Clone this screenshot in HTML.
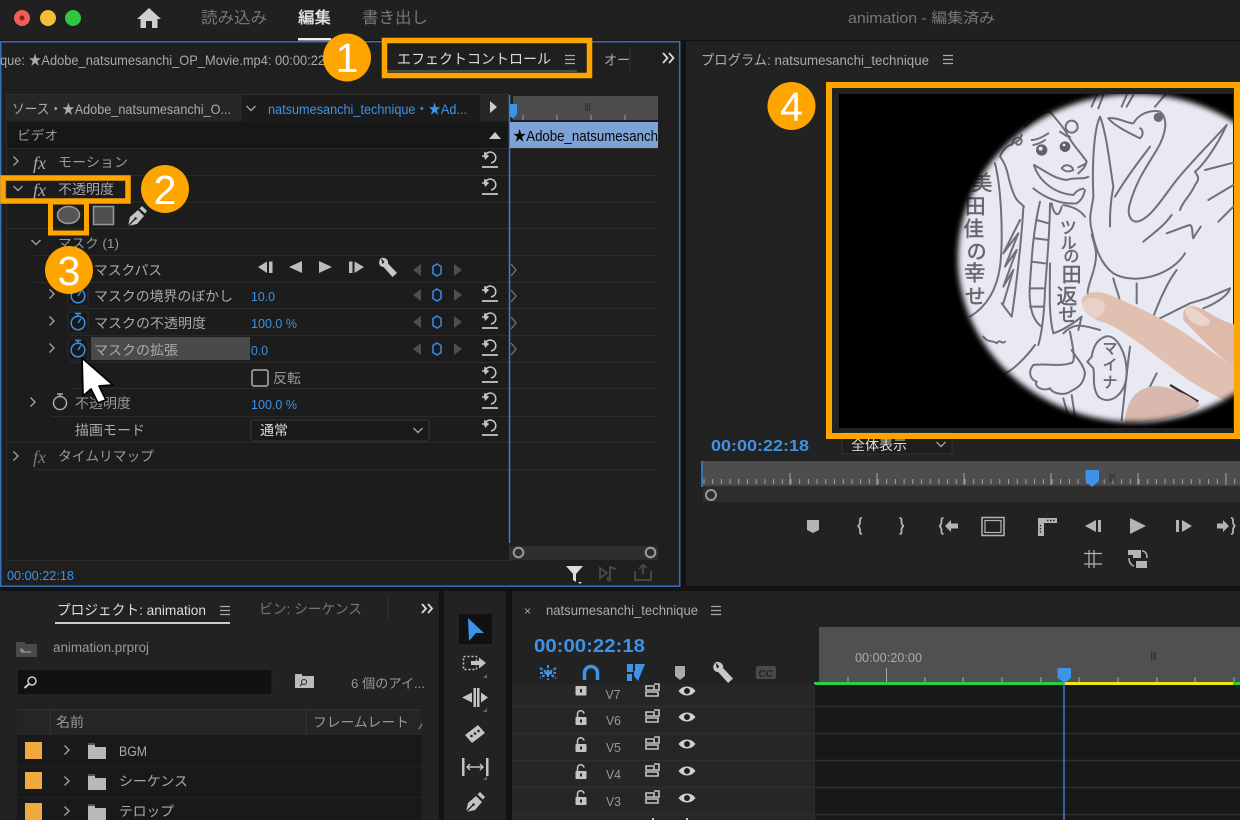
<!DOCTYPE html>
<html lang="ja"><head><meta charset="utf-8"><title>animation</title>
<style>
html,body{margin:0;padding:0;background:#111;width:1240px;height:820px;overflow:hidden}
svg{display:block}
text{font-family:"Liberation Sans","Noto Sans CJK JP",sans-serif;fill:#999;font-size:13px}
.b{fill:#3d93e6}.w{fill:#ddd}.l{fill:#aaa}.d{fill:#777}
.h{fill:#66666e;font-weight:400;stroke:#66666e;stroke-width:1.5px}
</style></head><body>
<svg width="1240" height="820" viewBox="0 0 1240 820" xmlns="http://www.w3.org/2000/svg">
<defs>
<g id="reset" fill="none" stroke="#c4c4c4" stroke-width="1.6"><path d="M-8 8H8" stroke-width="1.8"/><path d="M-5 -3A5.500 5.500 0 1 1 1 4"/><path d="M-8 -3H-1.500M-5 -7V-1" stroke-width="1.500"/><path d="M-1 -3L-5 1L-6 -6Z" fill="#c4c4c4" stroke="none"/></g>
<g id="kf"><path d="M-16 -6V6L-24 0Z" fill="#4e4e4e"/><path d="M0 -6L4 -3.500V3.500L0 6L-4 3.500V-3.500Z" fill="none" stroke="#3a86dc" stroke-width="1.600"/><path d="M17 -6L25 0L17 6Z" fill="#4e4e4e"/></g>
<g id="sw" fill="none" stroke="#3d8fe6" stroke-width="1.500"><circle cy="1" r="6.800"/><path d="M-3 -8.500H3M0 -8.500V-5.500M0 1L3 -3.500"/></g>
<g id="swb"><rect x="-10" y="-10" width="20" height="21" rx="2" fill="#181818" stroke="#2c2c2c"/><use href="#sw"/></g>
<path id="chr" d="M-2.500 -4.500L2 0L-2.500 4.500" fill="none" stroke="#a0a0a0" stroke-width="1.400"/>
<path id="chd" d="M-4.500 -2L0 2.500L4.500 -2" fill="none" stroke="#a0a0a0" stroke-width="1.400"/>
<g id="hb" stroke="#aaa" stroke-width="1.200"><path d="M0 .5H10M0 4.500H10M0 8.500H10"/></g>
<g id="fold"><path d="M0 2H7V4H18V16H0Z" fill="#b8b8b8"/><path d="M0 1H7" stroke="#888"/></g>
<g id="lock" fill="#c4c4c4"><rect x="-5.500" y="-1" width="11" height="8" rx="1"/><path d="M-3.500 -1V-3.500A3 3 0 0 1 3 -4.500" fill="none" stroke="#c4c4c4" stroke-width="1.500"/><rect x="-1" y="1.500" width="2" height="3" fill="#222"/></g>
<g id="tg" fill="none" stroke="#c4c4c4" stroke-width="1.600"><path d="M-7 -4H1V0H-7ZM-7 2H5V6H-7ZM1 -6H6V0H1"/></g>
<g id="eye"><path d="M-8.500 0C-4 -6 4 -6 8.500 0C4 6 -4 6 -8.500 0Z" fill="#d0d0d0"/><circle r="3" fill="#222"/></g>
<g id="wr"><path d="M-6 -9C-10 -4 -7 0 -3.500 0L5.500 10L10 6L1 -3.500C2 -7 -2 -10 -6 -9L-2.500 -5L-4.500 -3Z" fill="#c8c8c8"/></g>
<g id="pen"><path d="M-9 10L-7 1L1 -6L7 0L0 8Z" fill="#c4c4c4"/><path d="M2.500 -7.500L5 -10L10 -5L8 -2.500Z" fill="#c4c4c4"/><path d="M-9 10L-2 3" stroke="#222" stroke-width="1.300"/><circle cx="-1.500" cy="2.500" r="1.300" fill="#222"/></g>
<mask id="pm"><rect x="839" y="94" width="394" height="334" fill="#000"/><ellipse cx="1135" cy="258" rx="177" ry="164" fill="#fff" style="filter:blur(3px)"/></mask>
<clipPath id="hc"><rect x="842" y="439" width="110" height="16"/></clipPath>
</defs>

<rect width="1240" height="820" fill="#121212"/>
<!-- top bar -->
<rect width="1240" height="40" fill="#202020"/>
<circle cx="22" cy="18" r="8" fill="#ee5f58"/><circle cx="22" cy="18" r="2.500" fill="#8f1f1a"/>
<circle cx="48" cy="18" r="8" fill="#f6bd3b"/><circle cx="73" cy="18" r="8" fill="#2ec840"/>
<path d="M149 8L161 19H157.500V28H152V21H146V28H140.500V19H137Z" fill="#cfcfcf"/>
<text x="201" y="23" style="font-size:16px" textLength="66" lengthAdjust="spacingAndGlyphs" class="d">読み込み</text>
<text x="298" y="23" style="font-size:16px;font-weight:700" textLength="33" lengthAdjust="spacingAndGlyphs" class="w">編集</text>
<text x="362" y="23" style="font-size:16px" textLength="66" lengthAdjust="spacingAndGlyphs" class="d">書き出し</text>
<rect x="298" y="38" width="33" height="2.500" fill="#eee"/>
<text x="848" y="23" style="font-size:14.500px" textLength="147" lengthAdjust="spacingAndGlyphs" class="d">animation - 編集済み</text>

<!-- effect controls -->
<rect x="0" y="41" width="680" height="545" fill="#1f1f1f"/>
<rect x=".7" y="41.700" width="679" height="544.500" fill="none" stroke="#3670b8" stroke-width="1.500"/>
<text x="0" y="65" style="font-size:14px" textLength="325" lengthAdjust="spacingAndGlyphs" class="l">que: ★Adobe_natsumesanchi_OP_Movie.mp4: 00:00:22</text>
<text x="397" y="64" style="font-size:14px" textLength="154" lengthAdjust="spacingAndGlyphs" class="w">エフェクトコントロール</text>
<use href="#hb" x="565" y="55"/>
<path d="M387 71H577" stroke="#777"/>
<text x="604" y="65" style="font-size:14px" textLength="26" lengthAdjust="spacingAndGlyphs" class="l">オー</text><path d="M630 47V71" stroke="#333"/>
<path d="M663 53L667.500 58L663 63M669 53L673.500 58L669 63" fill="none" stroke="#d8d8d8" stroke-width="1.800"/>

<!-- inner -->
<rect x="6.500" y="94.500" width="503" height="466" fill="#1c1c1c" stroke="#2e2e2e"/>
<rect x="7" y="95" width="235" height="26" fill="#262626"/>
<rect x="242" y="95" width="238" height="26" fill="#1b1b1b"/>
<rect x="480" y="95" width="29" height="26" fill="#262626"/>
<text x="12" y="114" style="font-size:14px" textLength="219" lengthAdjust="spacingAndGlyphs" class="l">ソース・★Adobe_natsumesanchi_O...</text>
<use href="#chd" x="251" y="108"/>
<text x="268" y="114" style="font-size:14px" textLength="199" lengthAdjust="spacingAndGlyphs" class="b">natsumesanchi_technique・★Ad...</text>
<path d="M490 101L497 107L490 113Z" fill="#ccc"/>
<rect x="7" y="122" width="502" height="26" fill="#171717"/>
<text x="17" y="140" style="font-size:13px" textLength="41" lengthAdjust="spacingAndGlyphs">ビデオ</text>
<path d="M489 139L495 132L501 139Z" fill="#ccc"/>
<g stroke="#2a2a2a"><path d="M7 148.500H658M7 175.500H658M7 202.500H658M7 228.500H658M33 255.500H658M33 282.500H658M70 308.500H658M70 335.500H658M70 362.500H658M70 388.500H658M51 416.500H658M7 442.500H658M33 469.500H658"/></g>
<!-- rows -->
<use href="#chr" x="16" y="161"/>
<text x="33" y="169" style="font-size:18px;font-family:'Liberation Serif',serif;font-style:italic" class="l">fx</text>
<text x="58" y="167" style="font-size:13.500px" textLength="70" lengthAdjust="spacingAndGlyphs">モーション</text>
<use href="#reset" x="490" y="159"/>
<use href="#chd" x="18" y="188"/>
<text x="33" y="196" style="font-size:18px;font-family:'Liberation Serif',serif;font-style:italic" class="l">fx</text>
<text x="58" y="194" style="font-size:13.500px" textLength="56" lengthAdjust="spacingAndGlyphs" class="l">不透明度</text>
<use href="#reset" x="490" y="186"/>
<ellipse cx="68.500" cy="215" rx="11" ry="8.500" fill="#555" stroke="#9a9a9a" stroke-width="1.500"/>
<rect x="93.500" y="206.500" width="20" height="18" fill="#4e4e4e" stroke="#999" stroke-width="1.500"/>
<use href="#pen" transform="translate(137,216)"/>
<use href="#chd" x="36" y="242"/>
<text x="58" y="248" style="font-size:13px" textLength="61" lengthAdjust="spacingAndGlyphs">マスク (1)</text>
<text x="94" y="275" style="font-size:13.500px" textLength="68" lengthAdjust="spacingAndGlyphs" class="l">マスクパス</text>
<!-- transport -->
<g fill="#bcbcbc"><path d="M258 267L267 261.500V273ZM269 261.500H272.500V273H269Z"/><path d="M289 267L302 261V273Z"/><path d="M319 261L332 267L319 273Z"/><path d="M349 261.500H352.500V273H349ZM354.500 261.500L364 267L354.500 273Z"/></g>
<use href="#wr" x="387" y="267"/>
<use href="#kf" x="437" y="270"/>
<text x="94" y="301" style="font-size:13.500px" textLength="139" lengthAdjust="spacingAndGlyphs" class="l">マスクの境界のぼかし</text>
<text x="251" y="301" style="font-size:13px" textLength="24" lengthAdjust="spacingAndGlyphs" class="b">10.0</text>
<use href="#kf" x="437" y="295"/><use href="#reset" x="490" y="293"/>
<use href="#chr" x="52" y="294"/><use href="#swb" x="78" y="295"/>
<text x="94" y="328" style="font-size:13.500px" textLength="112" lengthAdjust="spacingAndGlyphs" class="l">マスクの不透明度</text>
<text x="251" y="328" style="font-size:13px" textLength="46" lengthAdjust="spacingAndGlyphs" class="b">100.0 %</text>
<use href="#kf" x="437" y="322"/><use href="#reset" x="490" y="320"/>
<use href="#chr" x="52" y="321"/><use href="#swb" x="78" y="322"/>
<rect x="91" y="337" width="159" height="23" fill="#4a4a4a"/>
<text x="94" y="355" style="font-size:13.500px" textLength="84" lengthAdjust="spacingAndGlyphs" class="l">マスクの拡張</text>
<text x="251" y="355" style="font-size:13px" textLength="17" lengthAdjust="spacingAndGlyphs" class="b">0.0</text>
<use href="#kf" x="437" y="349"/><use href="#reset" x="490" y="347"/>
<use href="#chr" x="52" y="348"/><use href="#swb" x="78" y="349"/>
<rect x="252" y="370" width="16" height="16" rx="2" fill="none" stroke="#999" stroke-width="1.800"/>
<text x="273" y="383" style="font-size:13.500px" textLength="28" lengthAdjust="spacingAndGlyphs">反転</text>
<use href="#reset" x="490" y="374"/>
<use href="#chr" x="33" y="402"/>
<g fill="none" stroke="#aaa" stroke-width="1.500"><circle cx="60" cy="403" r="6.500"/><path d="M57 394H63M60 394V396.500"/></g>
<text x="75" y="408" style="font-size:13.500px" textLength="56" lengthAdjust="spacingAndGlyphs">不透明度</text>
<text x="251" y="409" style="font-size:13px" textLength="46" lengthAdjust="spacingAndGlyphs" class="b">100.0 %</text>
<use href="#reset" x="490" y="400"/>
<text x="75" y="435" style="font-size:13.500px" textLength="70" lengthAdjust="spacingAndGlyphs" class="l">描画モード</text>
<rect x="251" y="420" width="178" height="21" rx="2" fill="#1a1a1a" stroke="#383838"/>
<text x="260" y="435" style="font-size:13.500px" textLength="28" lengthAdjust="spacingAndGlyphs" class="w">通常</text>
<use href="#chd" x="418" y="430"/>
<use href="#reset" x="490" y="427"/>
<use href="#chr" x="16" y="456"/>
<text x="33" y="463" style="font-size:18px;font-family:'Liberation Serif',serif;font-style:italic" class="d">fx</text>
<text x="58" y="461" style="font-size:13.500px" textLength="96" lengthAdjust="spacingAndGlyphs">タイムリマップ</text>
<!-- ECP right -->
<rect x="513" y="96" width="145" height="24" fill="#4c4c4c"/>
<path d="M523 115V120M557 115V120M591 115V120M625 115V120" stroke="#999"/>
<path d="M585.500 103V111M587.500 103V111M589.500 103V111" stroke="#2a2a2a" stroke-width=".8"/>
<path d="M509.500 95V543" stroke="#3a7fd0" stroke-width="1.500"/>
<path d="M510 104H517V114L513 119L510 116Z" fill="#3d93e6"/>
<rect x="510" y="122" width="148" height="26" fill="#7da3d6"/>
<text x="513" y="141" style="font-size:14.500px;fill:#050505" textLength="145" lengthAdjust="spacingAndGlyphs">★Adobe_natsumesanch</text>
<g fill="none" stroke="#777" stroke-width="1.200"><path d="M511 264L516 270L511 276M511 290L516 296L511 302M511 317L516 323L511 329M511 343L516 349L511 355"/></g>
<rect x="510" y="546" width="148" height="14" fill="#2e2e2e"/>
<circle cx="518.500" cy="552.500" r="4.800" fill="#2e2e2e" stroke="#999" stroke-width="2"/>
<circle cx="650.500" cy="552.500" r="4.800" fill="#2e2e2e" stroke="#999" stroke-width="2"/>
<text x="7" y="580" style="font-size:13px" textLength="67" lengthAdjust="spacingAndGlyphs" class="b">00:00:22:18</text>
<path d="M566 566H583L576 574V582L573 580V574Z" fill="#ddd"/><path d="M578 582H582L580 584Z" fill="#ddd"/>
<g fill="none" stroke="#4a4a4a" stroke-width="1.800"><path d="M600 568L607 573L600 578ZM610 578V567L616 569"/><circle cx="609" cy="579" r="1.500"/><path d="M635 571V580H651V571M643 574V566M639 569L643 565L647 568"/></g>

<!-- program -->
<rect x="686" y="41" width="554" height="545" fill="#222"/>
<text x="701" y="65" style="font-size:14px" textLength="228" lengthAdjust="spacingAndGlyphs" class="l">プログラム: natsumesanchi_technique</text>
<use href="#hb" x="943" y="55"/>
<rect x="839" y="94" width="394" height="334" fill="#000"/>
<g mask="url(#pm)">
<rect x="839" y="94" width="394" height="334" fill="#e9e9f3"/>
<g transform="translate(950,90) scale(.33333)">
<g fill="none" stroke="#707078" stroke-width="6" stroke-linecap="round" stroke-linejoin="round">
<path d="M430 320C425 200 435 110 450 80C470 130 480 230 490 290C480 340 480 380 480 410"/>
<path d="M430 320C425 360 415 380 425 420C435 470 450 520 490 550C560 590 670 550 705 490"/>
<path d="M475 85C500 80 530 100 550 100C570 65 610 60 630 65C655 85 650 130 620 180C590 230 560 270 540 340C530 370 540 395 560 395C600 390 640 320 680 270C720 220 790 150 830 105"/>
<path d="M475 85C490 105 530 125 570 145C585 130 575 115 570 115"/>
<path d="M495 320C530 260 570 210 600 170"/>
<path d="M665 375C640 410 610 430 580 455M650 430C680 420 700 410 720 405C730 410 725 430 730 445C740 425 750 415 752 410"/>
<path d="M765 240L850 218M775 330L850 285M805 395L850 350"/>
<path d="M830 105C800 170 760 225 735 245C745 260 750 265 735 285C720 320 700 330 690 360"/>
<path d="M425 50L440 15M445 55L460 15M515 50L530 15M530 50L550 15M615 50L645 15"/>
<path d="M490 565C495 590 510 620 510 640M560 580V640M680 540C650 580 625 640 610 680"/>
<path d="M620 690L720 640L770 625L840 595C835 615 800 640 760 655"/>
<path d="M300 65C320 90 340 110 350 130C370 170 395 190 410 215C405 235 395 240 385 250"/>
<circle cx="365" cy="110" r="18"/>
<path d="M245 150C260 150 280 140 295 130M250 165C265 162 275 158 285 150M330 125C345 135 350 140 360 140"/>
<path d="M335 235C345 220 365 225 370 240C355 248 345 245 335 235ZM385 232L405 222"/>
<path d="M252 225C265 270 310 310 370 315C390 290 400 300 400 295M252 225C290 245 310 265 350 270C375 260 400 270 415 260"/>
<path d="M250 295C280 320 330 345 380 340C395 330 400 320 405 300"/>
<path d="M270 335C250 420 245 500 240 580C235 640 245 690 275 710M300 340C300 420 290 530 285 600C283 660 278 720 265 765"/>
<path d="M260 390L295 400M255 445L295 450M245 515L285 520M240 595L280 595M240 650L280 650"/>
<path d="M305 340C310 370 325 390 335 350M340 345C370 350 390 360 405 380"/>
<path d="M300 520C300 600 295 670 310 730C340 720 370 700 395 680"/>
<path d="M135 220C155 300 160 450 150 530C140 600 110 650 60 680"/>
<path d="M220 350C215 450 195 620 185 680L155 640"/>
<path d="M210 390L160 490L205 430L165 530L200 480L160 590L190 540L160 640"/>
<path d="M215 135C205 170 170 150 150 200C180 240 170 270 195 320C205 340 215 340 222 350"/>
<path d="M185 165C190 140 215 135 215 155C210 170 195 165 200 155"/>
<path d="M225 110C270 70 290 65 300 65"/>
<path d="M255 765C230 800 190 840 165 850"/>
<path d="M100 740C115 760 130 750 140 760C150 745 155 765 165 755"/>
<path d="M340 730C370 700 390 705 420 712L450 720"/>
<path d="M360 725C370 780 380 820 360 820C330 830 290 820 250 825C230 850 245 870 260 875C250 890 280 905 300 895C310 915 350 915 360 905C390 890 400 880 405 850C400 820 375 800 365 780"/>
<path d="M365 915L375 980M340 925L355 980"/>
<path d="M465 740C500 730 530 790 530 850C530 910 480 950 445 920C425 890 435 860 430 835L412 815L425 800C430 770 440 750 465 740Z"/>
<path d="M540 770C530 850 525 900 515 990M620 850L590 910"/>
<path d="M425 435C440 480 445 500 425 560C415 590 410 610 415 615"/>
<path d="M395 680L385 720"/>
</g>
<circle cx="625" cy="82" r="14" fill="#6b6b72"/>
<circle cx="345" cy="170" r="16" fill="#60606a"/><circle cx="275" cy="180" r="17" fill="#60606a"/><circle cx="272" cy="176" r="6" fill="#e9e9f3"/><circle cx="342" cy="165" r="4" fill="#e9e9f3"/>
<path d="M660 885L745 935" stroke="#3a2c2a" stroke-width="7"/>
<text x="65" y="300" class="h" style="font-size:62px">美</text><text x="45" y="370" class="h" style="font-size:62px">田</text><text x="40" y="438" class="h" style="font-size:62px">佳</text><text x="50" y="505" class="h" style="font-size:60px">の</text><text x="42" y="572" class="h" style="font-size:64px">幸</text><text x="45" y="640" class="h" style="font-size:62px">せ</text>
<text x="330" y="430" class="h" style="font-size:50px">ツ</text><text x="332" y="475" class="h" style="font-size:48px">ル</text><text x="340" y="515" class="h" style="font-size:48px">の</text><text x="335" y="575" class="h" style="font-size:60px">田</text><text x="320" y="640" class="h" style="font-size:62px">返</text><text x="325" y="695" class="h" style="font-size:56px">せ</text>
<text x="458" y="790" class="h" style="font-size:44px">マ</text><text x="458" y="840" class="h" style="font-size:44px">イ</text><text x="458" y="892" class="h" style="font-size:44px">ナ</text>
<path d="M525 990C530 930 560 890 620 888C670 892 730 920 750 945C720 975 620 1000 525 1000Z" fill="#d9b9ae"/>
<path d="M700 665C712 635 745 650 780 670C810 690 840 700 860 705V830C810 810 740 730 700 690Z" fill="#dfbaa9"/>
<path d="M706 650C725 645 770 680 782 695C770 715 745 710 725 695C712 685 703 665 706 650Z" fill="#ead4cb"/>
<path d="M395 630C405 605 440 600 480 615C560 650 650 690 720 740C770 775 820 810 860 830V950C820 930 760 900 700 860C620 800 530 725 470 700C430 690 395 670 395 630Z" fill="#e0c0b0"/>
<path d="M398 640C410 615 445 620 465 640C465 665 450 685 430 685C410 675 398 660 398 640Z" fill="#e8d2c7"/>
</g>
</g>

<!-- under preview -->
<rect x="842" y="433" width="110" height="21" rx="2" fill="#1e1e1e" stroke="#333"/>
<text x="851" y="450" style="font-size:13.500px" textLength="56" lengthAdjust="spacingAndGlyphs" class="w" clip-path="url(#hc)">全体表示</text>
<use href="#chd" x="941" y="444"/>
<text x="711" y="451" style="font-size:16px;font-weight:700" textLength="98" lengthAdjust="spacingAndGlyphs" class="b">00:00:22:18</text>
<rect x="703" y="461" width="537" height="26" fill="#4d4d4d"/>
<rect x="703" y="488" width="537" height="14" fill="#2e2e2e"/>
<path d="M703 486.500H1240" stroke="#333" stroke-width="2"/>
<path d="M703.500 481.500H1240" stroke="#a0a0a0" stroke-width="5" stroke-dasharray="1 7.700"/>
<path d="M790 473V485M877 473V485M964 473V485M1051 473V485M1138 473V485M1226 473V485" stroke="#a8a8a8"/>
<path d="M702 461V487" stroke="#3d8fe6" stroke-width="1.500"/>
<path d="M1110 474V482M1112 474V482M1114 474V482" stroke="#2a2a2a" stroke-width=".8"/>
<path d="M1085.500 470H1099V481L1092 487L1085.500 481Z" fill="#3d93e6"/>
<circle cx="711" cy="495" r="5" fill="#2e2e2e" stroke="#999" stroke-width="2"/>
<!-- transport -->
<g fill="#b4b4b4">
<path d="M807 520H819V530L813 533L807 530Z"/>
<path d="M862 518C859.500 518 860 520 860 522C860 525 858 526 857.500 526C858 526 860 527 860 530C860 532 859.500 534 862 534" fill="none" stroke="#b4b4b4" stroke-width="1.800"/>
<path d="M899.500 518C902 518 901.500 520 901.500 522C901.500 525 903.500 526 904 526C903.500 526 901.500 527 901.500 530C901.500 532 902 534 899.500 534" fill="none" stroke="#b4b4b4" stroke-width="1.800"/>
<path d="M943.500 518C941 518 941.500 520 941.500 522C941.500 525 939.500 526 939 526C939.500 526 941.500 527 941.500 530C941.500 532 941 534 943.500 534" fill="none" stroke="#b4b4b4" stroke-width="1.800"/>
<path d="M945 526L951 520V523.500H958V528.500H951V532Z"/>
<rect x="982" y="517.500" width="22" height="18" fill="none" stroke="#b4b4b4" stroke-width="1.500"/><rect x="985" y="520.500" width="16" height="12" fill="none" stroke="#b4b4b4" stroke-width="1.200"/>
<path d="M1038 518H1057V523H1044V536H1038Z"/>
<path d="M1047 520.500H1055M1040.500 525V534" stroke="#222" stroke-width="1.400" stroke-dasharray="1.500 1.500" fill="none"/>
<path d="M1085 526L1096 520V532ZM1098 520H1101V532H1098Z"/>
<path d="M1130 518L1146 526L1130 534Z"/>
<path d="M1176 520H1179V532H1176ZM1182 520L1192 526L1182 532Z"/>
<path d="M1217 523.500H1223V520L1229 526L1223 532V528.500H1217Z"/>
<path d="M1231 518C1233.500 518 1233 520 1233 522C1233 525 1235 526 1235.500 526C1235 526 1233 527 1233 530C1233 532 1233.500 534 1231 534" fill="none" stroke="#b4b4b4" stroke-width="1.800"/>
<path d="M1084 553.500H1102M1084 564H1102M1089 550V568M1094 550V568" stroke="#b4b4b4" stroke-width="1.200" fill="none"/>
<path d="M1128 550H1141V558H1133V555H1128ZM1136 561H1147V568H1136Z"/>
<path d="M1142 551C1146 551 1147 554 1147 558M1129 558C1129 563 1131 565 1134 566" fill="none" stroke="#b4b4b4" stroke-width="1.500"/>
</g>

<!-- project -->
<rect x="0" y="591" width="439" height="229" fill="#222"/>
<text x="57" y="615" style="font-size:14px" textLength="149" lengthAdjust="spacingAndGlyphs" class="w">プロジェクト: animation</text>
<use href="#hb" x="220" y="606"/>
<rect x="55" y="622" width="175" height="2" fill="#ccc"/>
<text x="259" y="614" style="font-size:14px" textLength="103" lengthAdjust="spacingAndGlyphs" class="d">ビン: シーケンス</text>
<path d="M388 597V621" stroke="#333"/>
<path d="M422 604L426 608.500L422 613M428 604L432 608.500L428 613" fill="none" stroke="#ddd" stroke-width="1.800"/>
<path d="M16 642H25V644H37V657H16Z" fill="#4a4a4a"/><path d="M21 652V649L24 651M21 652H31" stroke="#aaa" fill="none"/>
<text x="53" y="652" style="font-size:13.500px" textLength="96" lengthAdjust="spacingAndGlyphs">animation.prproj</text>
<rect x="17" y="669" width="255" height="26" rx="2" fill="#111" stroke="#2a2a2a"/>
<circle cx="32" cy="681" r="4" fill="none" stroke="#ccc" stroke-width="1.500"/><path d="M29 684L24.500 688" stroke="#ccc" stroke-width="2"/>
<path d="M295 674H302V676H314V688H295Z" fill="#bbb"/><circle cx="304" cy="682" r="2.500" fill="none" stroke="#222"/>
<path d="M302 684L300 686" stroke="#222"/>
<text x="351" y="688" style="font-size:13px" textLength="74" lengthAdjust="spacingAndGlyphs">6 個のアイ...</text>
<rect x="17" y="710" width="405" height="25" fill="#252525"/>
<path d="M17.500 710H422M50 710V735M306 710V735" stroke="#333"/>
<text x="56" y="727" style="font-size:13.500px" textLength="28" lengthAdjust="spacingAndGlyphs">名前</text>
<text x="313" y="727" style="font-size:13.500px" textLength="96" lengthAdjust="spacingAndGlyphs">フレームレート</text>
<path d="M419 729L422 724" stroke="#999"/>
<rect x="17" y="735" width="405" height="31" fill="#191919"/><rect x="17" y="767" width="405" height="30" fill="#191919"/><rect x="17" y="798" width="405" height="22" fill="#191919"/>
<rect x="25" y="742" width="17" height="17" fill="#f0a93c"/><rect x="25" y="772" width="17" height="17" fill="#f0a93c"/><rect x="25" y="803" width="17" height="17" fill="#f0a93c"/>
<use href="#chr" x="67" y="750"/><use href="#chr" x="67" y="781"/><use href="#chr" x="67" y="811"/>
<use href="#fold" x="88" y="743"/><use href="#fold" x="88" y="774"/><use href="#fold" x="88" y="804"/>
<text x="119" y="756" style="font-size:13.500px" textLength="28" lengthAdjust="spacingAndGlyphs" class="l">BGM</text>
<text x="119" y="786" style="font-size:13.500px" textLength="69" lengthAdjust="spacingAndGlyphs" class="l">シーケンス</text>
<text x="119" y="816" style="font-size:13.500px" textLength="55" lengthAdjust="spacingAndGlyphs" class="l">テロップ</text>

<!-- tools -->
<rect x="444" y="591" width="62" height="229" fill="#222"/>
<rect x="458" y="613" width="35" height="32" rx="2" fill="#111" stroke="#2a2a2a"/>
<path d="M468 618L484 633L476 633L469 641Z" fill="#3d93e6"/>
<g fill="#c4c4c4">
<rect x="463.500" y="656.500" width="13" height="13" fill="none" stroke="#c4c4c4" stroke-dasharray="2 2" stroke-width="1.500"/>
<path d="M471 661H479V657.500L486 663L479 668.500V665H471Z"/>
<path d="M483 678H487V674Z" fill="#666"/>
<path d="M473.500 688H476V707H473.500ZM477 688H479.500V707H477ZM462 697.500L472 692.500V702.500ZM481 692.500L488 697.500L481 702.500Z"/>
<path d="M483 712H487V708Z" fill="#666"/>
<path d="M478 725L485 733L472 743L465 735Z"/>
<circle cx="471.500" cy="736" r="1.300" fill="#222"/><circle cx="475" cy="733.500" r="1.300" fill="#222"/><circle cx="478.500" cy="731" r="1.300" fill="#222"/>
<path d="M462 758H464.500V776H462ZM486 758H488.500V776H486Z"/>
<path d="M468 767H483M470 764L467 767L470 770M480 764L483 767L480 770" fill="none" stroke="#c4c4c4" stroke-width="1.400"/>
<path d="M483 780H487V776Z" fill="#666"/>
</g>
<use href="#pen" transform="translate(475,802)"/>

<!-- timeline -->
<rect x="512" y="591" width="728" height="229" fill="#222"/>
<text x="524" y="615" style="font-size:12px" class="l">×</text>
<text x="546" y="615" style="font-size:14px" textLength="152" lengthAdjust="spacingAndGlyphs" class="l">natsumesanchi_technique</text>
<use href="#hb" x="711" y="606"/>
<text x="534" y="652" style="font-size:18px;font-weight:700" textLength="111" lengthAdjust="spacingAndGlyphs" class="b">00:00:22:18</text>
<rect x="819" y="627" width="421" height="56" fill="#505050"/>
<text x="855" y="662" style="font-size:13px" textLength="67" lengthAdjust="spacingAndGlyphs" class="l">00:00:20:00</text>
<path d="M848 677V682M886.500 668V682M925 677V682M963 677V682M1002 677V682M1041 677V682M1079 677V682M1118 677V682M1157 677V682M1195 677V682M1234 677V682" stroke="#a8a8a8"/>
<path d="M1151.500 652V660M1153.500 652V660M1155.500 652V660" stroke="#2a2a2a" stroke-width=".8"/>
<rect x="512" y="684" width="303" height="136" fill="#262626"/>
<rect x="815" y="685" width="425" height="135" fill="#181818"/>
<path d="M814 683.500H1064" stroke="#1fd43f" stroke-width="3"/><path d="M1064 683.500H1233" stroke="#f4e60f" stroke-width="3"/><path d="M1233 683.500H1240" stroke="#1fd43f" stroke-width="3"/>
<path d="M512 706.500H1240M512 733.500H1240M512 760.500H1240M512 787.500H1240M512 814.500H1240" stroke="#2f2f2f" stroke-width="1.500"/>
<path d="M814.500 684V820" stroke="#2e2e2e"/>
<!-- toolbar icons -->
<g stroke="#3d93e6" fill="none" stroke-width="2">
<path d="M548 665V680M540 668L556 678M556 668L540 678M540 673H556" stroke-dasharray="3 1.500"/>
<path d="M584.500 680V673A6.500 6.500 0 0 1 597.500 673V680" stroke-width="3.500"/>
</g>
<path d="M627 664H633V672H627ZM635 664H645L638 681L634 676V671H635ZM627 674H632V681H627Z" fill="#3d93e6"/>
<path d="M675 666H685V676L680 680L675 676Z" fill="#aaa"/>
<use href="#wr" transform="translate(722,672) scale(1.100)"/>
<rect x="756" y="666" width="20" height="13" rx="2" fill="#4a4a4a"/>
<text x="758.500" y="677" style="font-size:10px;font-weight:700;fill:#222">CC</text>
<!-- track heads -->
<rect x="575.500" y="686" width="11" height="9.500" rx="1" fill="#c4c4c4"/><rect x="580" y="689" width="2" height="3.500" fill="#222"/>
<use href="#lock" x="581" y="718"/><use href="#lock" x="581" y="745"/><use href="#lock" x="581" y="772"/><use href="#lock" x="581" y="798"/>
<text x="605.500" y="699" style="font-size:13px" textLength="15" lengthAdjust="spacingAndGlyphs">V7</text>
<text x="606" y="725" style="font-size:13px" textLength="15" lengthAdjust="spacingAndGlyphs">V6</text>
<text x="606" y="752" style="font-size:13px" textLength="15" lengthAdjust="spacingAndGlyphs">V5</text>
<text x="606" y="779" style="font-size:13px" textLength="15" lengthAdjust="spacingAndGlyphs">V4</text>
<text x="606" y="806" style="font-size:13px" textLength="15" lengthAdjust="spacingAndGlyphs">V3</text>
<use href="#tg" x="653" y="690"/><use href="#tg" x="653" y="716"/><use href="#tg" x="653" y="743"/><use href="#tg" x="653" y="770"/><use href="#tg" x="653" y="797"/>
<use href="#eye" x="687" y="691"/><use href="#eye" x="687" y="717"/><use href="#eye" x="687" y="744"/><use href="#eye" x="687" y="771"/><use href="#eye" x="687" y="798"/>
<path d="M653 820V818M687 820V818" stroke="#c4c4c4" stroke-width="2"/>
<path d="M1064 680V820" stroke="#3d8fe6" stroke-width="1.300"/>
<path d="M1057.500 668H1071V678L1064.500 683L1057.500 678Z" fill="#3d93e6"/>

<!-- annotations -->
<g fill="none" stroke="#ffa500">
<rect x="384.500" y="40.500" width="205" height="35" stroke-width="5.500"/>
<rect x="3" y="178" width="125" height="23" stroke-width="5.500"/>
<rect x="50.500" y="202" width="36" height="31" stroke-width="5"/>
<rect x="829" y="85" width="408" height="351" stroke-width="6"/>
</g>
<g fill="#ffa500"><circle cx="347" cy="57.500" r="24"/><circle cx="165" cy="189" r="24"/><circle cx="69" cy="270" r="24"/><circle cx="791.500" cy="106" r="24"/></g>
<text x="347" y="72" style="font-size:41px;fill:#fff;text-anchor:middle">1</text>
<text x="165" y="204" style="font-size:41px;fill:#fff;text-anchor:middle">2</text>
<text x="69" y="285" style="font-size:41px;fill:#fff;text-anchor:middle">3</text>
<text x="791.500" y="121" style="font-size:41px;fill:#fff;text-anchor:middle">4</text>
<!-- cursor -->
<path d="M82 358L113 385L99 386L106 400L98 403L91 389L83 396Z" fill="#fff" stroke="#000" stroke-width="1.800" stroke-linejoin="round"/>
</svg>
</body></html>
